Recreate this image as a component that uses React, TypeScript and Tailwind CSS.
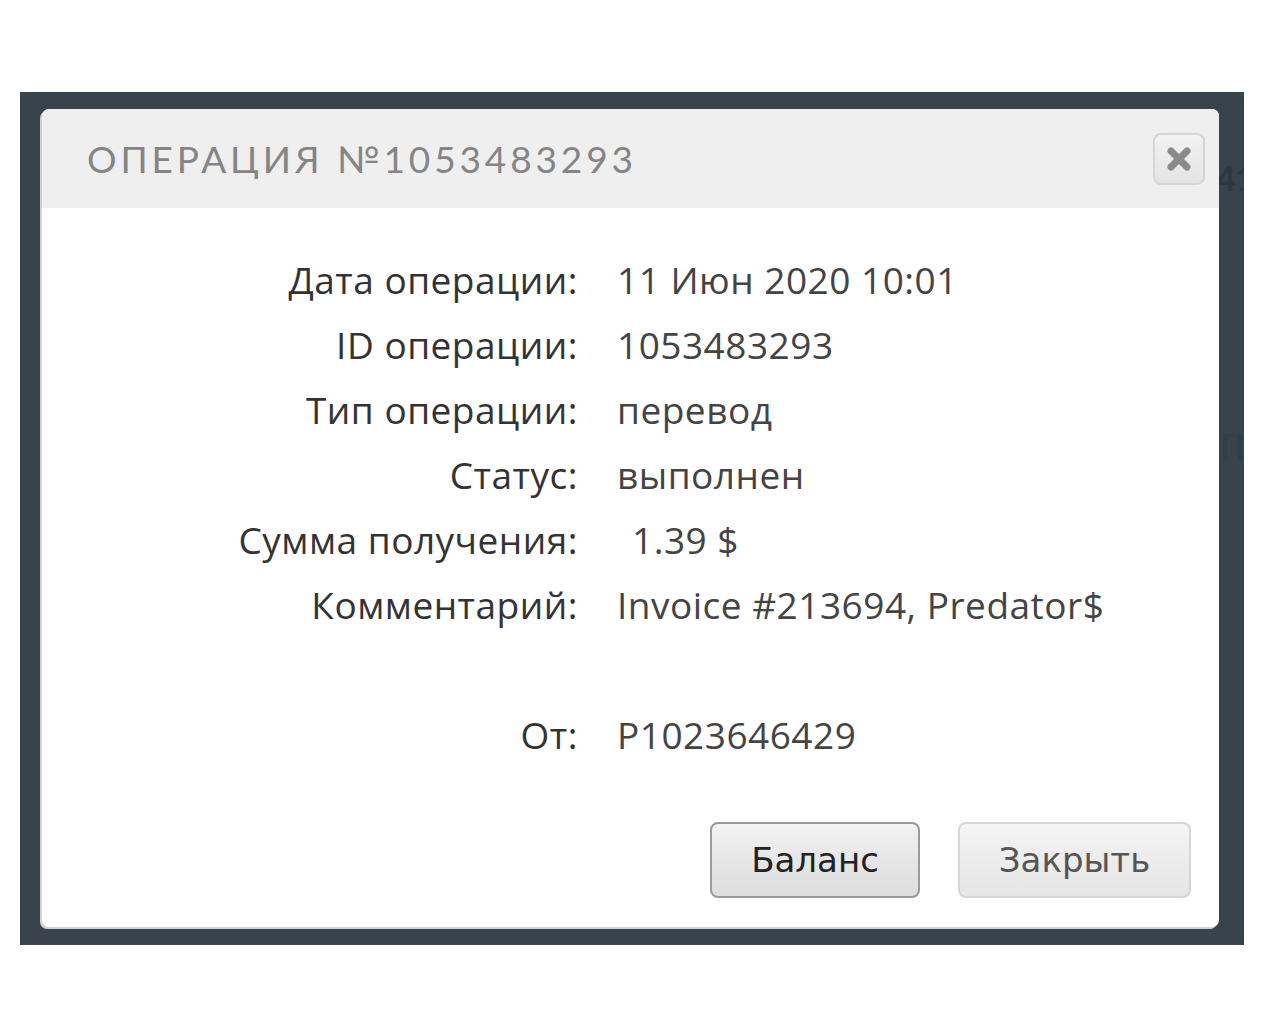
import React from "react";

const rows: [string, string, string?][] = [
  ["Дата операции:", "11 Июн 2020 10:01"],
  ["ID операции:", "1053483293"],
  ["Тип операции:", "перевод"],
  ["Статус:", "выполнен"],
  ["Сумма получения:", "1.39 $", "pl-[54px]"],
  ["Комментарий:", "Invoice #213694, Predator$"],
];

export default function App() {
  return (
    <div className="w-[1280px] h-[1024px] bg-white pt-[92px] pl-[20px]">
      <div className="relative w-[1224px] h-[853px] bg-[#37444c] pt-[17px] pl-[22px] overflow-hidden">
        <div className="absolute left-[1196px] top-[60px] text-[34px] text-[#2d383e] font-['Lato',sans-serif] font-bold">41</div>
        <div className="absolute left-[1200px] top-[328px] text-[34px] text-[#333f46] font-['Lato',sans-serif] font-bold">П</div>
        <div className="relative w-[1177px] h-[818px] bg-white rounded-[7px] shadow-[-2px_2px_0_0_#cfd3d5] overflow-hidden">
          <div className="h-[99px] bg-[#efefef] flex items-center justify-between pl-[45px] pr-[14px]">
            <div className="text-[37px] tracking-[0.105em] text-[#858585] font-['Lato',sans-serif] font-normal leading-none">
              ОПЕРАЦИЯ №1053483293
            </div>
            <button className="w-[52px] h-[52px] rounded-[8px] border-2 border-[#d5d5d5] bg-gradient-to-b from-[#f2f2f2] to-[#e4e4e4] flex items-center justify-center">
              <svg width="26" height="26" viewBox="0 0 26 26">
                <path d="M5 5 L21 21 M21 5 L5 21" stroke="#8a8a8a" strokeWidth="7" strokeLinecap="round" />
              </svg>
            </button>
          </div>
          <div className="pt-[39px] font-['Open_Sans',sans-serif] text-[37px] tracking-[0.5px] leading-[65px]">
            {rows.map(([l, v, extra]) => (
              <div key={l} className="flex">
                <div className="w-[536px] text-right text-[#333]">{l}</div>
                <div className={(extra ?? "pl-[39px]") + " text-[#444]"}>{v}</div>
              </div>
            ))}
            <div className="h-[65px]" />
            <div className="flex">
              <div className="w-[536px] text-right text-[#333]">От:</div>
              <div className="pl-[39px] text-[#444]">P1023646429</div>
            </div>
          </div>
          <div className="absolute left-[668px] top-[713px] flex gap-[38px] font-['DejaVu_Sans',sans-serif] text-[34px]">
            <button className="w-[210px] h-[76px] rounded-[8px] border-2 border-[#9a9a9a] bg-gradient-to-b from-[#f3f3f3] via-[#e6e6e6] to-[#dedede] text-[#222]">
              Баланс
            </button>
            <button className="w-[233px] h-[76px] rounded-[8px] border-2 border-[#d6d6d6] bg-gradient-to-b from-[#f5f5f5] via-[#ececec] to-[#e6e6e6] text-[#555]">
              Закрыть
            </button>
          </div>
        </div>
      </div>
    </div>
  );
}
